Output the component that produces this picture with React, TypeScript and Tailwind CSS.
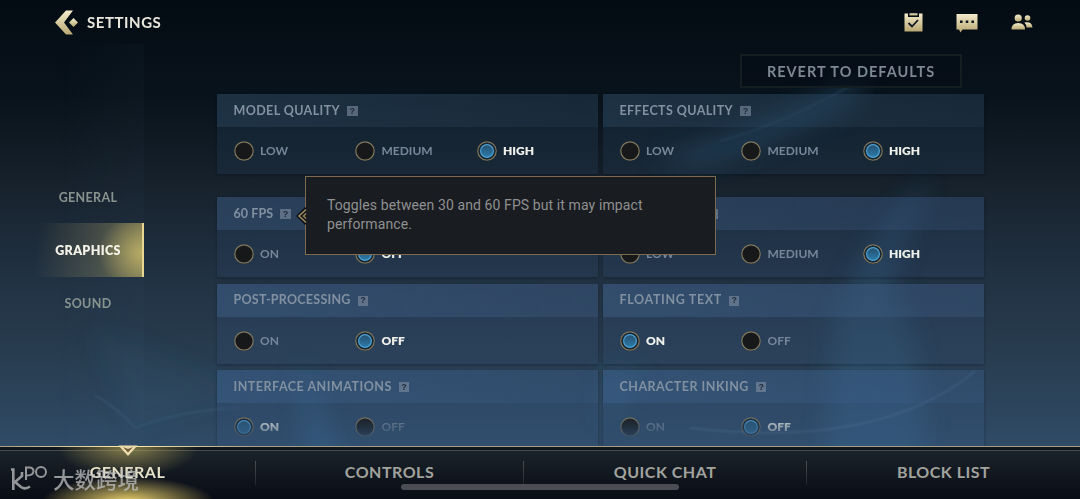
import type { ReactNode } from 'react'

type Option = { label: string; selected?: boolean }
type Setting = { title: string; tracking: string; options: Option[]; faded?: boolean }

const quality: Option[] = [{ label: 'LOW' }, { label: 'MEDIUM' }, { label: 'HIGH', selected: true }]

const rows: { gap: string; head: string; body: string; cards: Setting[] }[] = [
  {
    gap: 'mb-[23px]',
    head: 'from-[#33506b]/35 to-[#2a4358]/25',
    body: 'bg-[#26405a]/30',
    cards: [
      { title: 'MODEL QUALITY', tracking: 'tracking-[0.4px]', options: quality },
      { title: 'EFFECTS QUALITY', tracking: 'tracking-[0.4px]', options: quality },
    ],
  },
  {
    gap: 'mb-[6.5px]',
    head: 'from-[#3a587c]/45 to-[#38547a]/30',
    body: 'bg-[#2b4566]/30',
    cards: [
      { title: '60 FPS', tracking: 'tracking-[0.1px]', options: [{ label: 'ON' }, { label: 'OFF', selected: true }] },
      { title: 'RESOLUTION', tracking: 'tracking-[0.2px]', options: quality },
    ],
  },
  {
    gap: 'mb-[6.5px]',
    head: 'from-[#41628c]/45 to-[#41608a]/30',
    body: 'bg-[#304a6e]/35',
    cards: [
      { title: 'POST-PROCESSING', tracking: 'tracking-[0.25px]', options: [{ label: 'ON' }, { label: 'OFF', selected: true }] },
      { title: 'FLOATING TEXT', tracking: 'tracking-[0.65px]', options: [{ label: 'ON', selected: true }, { label: 'OFF' }] },
    ],
  },
  {
    gap: '',
    head: 'from-[#416896]/35 to-[#3e608b]/20',
    body: 'bg-[#345580]/30',
    cards: [
      { title: 'INTERFACE ANIMATIONS', tracking: 'tracking-[0.5px]', options: [{ label: 'ON', selected: true }, { label: 'OFF' }], faded: true },
      { title: 'CHARACTER INKING', tracking: 'tracking-[0.5px]', options: [{ label: 'ON' }, { label: 'OFF', selected: true }], faded: true },
    ],
  },
]

function Backdrop() {
  return (
    <svg className="absolute inset-0 -z-10" width="1080" height="446" viewBox="0 0 1080 446" preserveAspectRatio="none">
      <defs>
        <linearGradient id="sky" x1="0" y1="0" x2="0" y2="1">
          <stop offset="0" stopColor="#030b13" />
          <stop offset="0.22" stopColor="#09131b" />
          <stop offset="0.42" stopColor="#17222d" />
          <stop offset="0.6" stopColor="#203041" />
          <stop offset="0.8" stopColor="#283d50" />
          <stop offset="1" stopColor="#304b66" />
        </linearGradient>
        <filter id="soft" x="-50%" y="-50%" width="200%" height="200%"><feGaussianBlur stdDeviation="12" /></filter>
        <filter id="line" x="-20%" y="-20%" width="140%" height="140%"><feGaussianBlur stdDeviation="1" /></filter>
      </defs>
      <rect width="1080" height="446" fill="url(#sky)" />
      <g filter="url(#soft)" fill="#3a7fb0">
        <path d="M650 160 Q760 130 870 70 L850 105 Q760 150 700 165Z" opacity=".32" />
        <path d="M930 180 Q870 225 835 320 L822 480 L925 480 Q930 350 890 290 Q905 240 930 180Z" opacity=".24" />
        <path d="M300 360 L350 470 L305 470Z" opacity=".26" />
        <path d="M604 370 L640 370 L606 430Z" opacity=".25" />
        <path d="M90 330 L135 427 L240 390 L150 350Z" opacity=".07" />
      </g>
      <g filter="url(#line)" fill="none" stroke="#7fa6c8">
        <path d="M95 395 Q120 410 135 428 Q180 410 240 408" opacity=".16" strokeWidth="1.5" />
        <path d="M690 428 Q880 450 975 371" opacity=".22" strokeWidth="2" />
        <path d="M720 141 Q780 125 850 86" opacity=".16" strokeWidth="1.5" />
      </g>
    </svg>
  )
}

function Help() {
  return (
    <span className="flex h-2.5 w-[10.5px] items-center justify-center bg-[#8090a2]/60 font-['Liberation_Sans'] text-[9px] leading-none font-bold tracking-normal text-[#1c2a3a]">
      ?
    </span>
  )
}

function Radio({ selected }: { selected?: boolean }) {
  return (
    <svg width="20" height="20" viewBox="0 0 20 20" className="shrink-0">
      <circle cx="10" cy="10.6" r="9.4" fill="#0a1119" opacity=".5" />
      <circle cx="10" cy="10" r="9.2" fill="#171819" stroke="#81785d" strokeWidth="1.2" />
      {selected && (
        <>
          <circle cx="10" cy="10" r="8.2" fill="#14293b" />
          <circle cx="10" cy="10" r="6.4" fill="url(#blue)" stroke="#4f9fd0" strokeWidth="1.2" />
        </>
      )}
    </svg>
  )
}

function Card({ title, tracking, options, faded, head, body }: Setting & { head: string; body: string }) {
  return (
    <section className={`flex h-20 w-[381px] shrink-0 flex-col shadow-[0_1px_3px_rgba(5,12,20,0.35)] ${body}`}>
      <div className={`flex h-[33px] items-center gap-[7px] bg-linear-to-r pt-px pl-[16.5px] text-[12.5px] font-bold text-[#8291a1] ${head} ${tracking}`}>
        <span>{title}</span>
        <Help />
      </div>
      <div className={`flex h-[47px] items-center pt-px pl-[16.5px] ${faded ? 'mask-[linear-gradient(to_bottom,rgba(0,0,0,0.85)_30%,transparent_85%)]' : ''}`}>
        {options.map(o => (
          <div key={o.label} className="flex w-[121.5px] items-center gap-[6.5px]">
            <Radio selected={o.selected} />
            <span className={`text-[12px] ${o.selected ? 'font-extrabold text-[#eef0e9]' : 'font-bold text-[#77879a]'}`}>
              {o.label}
            </span>
          </div>
        ))}
      </div>
    </section>
  )
}

function Tooltip() {
  return (
    <div className="absolute top-[176px] left-[305px] flex h-[79px] w-[411px] border border-[#7d6b51] bg-[#191c20] pt-[19px] pl-[21px]">
      <svg className="absolute top-[29px] -left-[10px]" width="11" height="20" viewBox="0 0 11 20">
        <path d="M10 2 L2 10 L10 18" fill="#17191c" stroke="#0d1218" strokeWidth="3" />
        <path d="M10 3.5 L3 10 L10 16.5" fill="#17191c" stroke="#a28b61" strokeWidth="1.5" />
        <path d="M10 7.5 L7.5 10 L10 12.5" fill="none" stroke="#a28b61" strokeWidth="1.2" />
      </svg>
      <p className="font-['Roboto',sans-serif] text-[14px] leading-[19px] tracking-[0.1px] text-[#8f9091]">
        Toggles between 30 and 60 FPS but it may impact
        <br />
        performance.
      </p>
    </div>
  )
}

function Header() {
  return (
    <header className="flex h-11 items-center justify-between pr-[47px] pl-[55px]">
      <div className="flex items-center gap-[9px]">
        <svg width="23" height="25" viewBox="0 0 23 25">
          <path d="M11 0.5 H18 L9 12.5 L18 24.5 H11 L0 12.5Z" fill="url(#gold)" />
          <path d="M18.500 8 L23 12.5 L18.500 17 L14 12.5Z" fill="url(#gold)" />
        </svg>
        <h1 className="text-[15px] font-bold tracking-[0.55px] text-[#e9e7dd]">SETTINGS</h1>
      </div>
      <div className="flex items-center gap-[33px]">
        <svg width="19" height="19" viewBox="0 0 19 19" fill="url(#gold)">
          <path d="M0.500 0.500 H4 V4 H15 V0.500 H18.500 V18.500 H0.500Z" />
          <rect x="5.500" y="0.300" width="8" height="2.200" />
          <path d="M4.500 10 L8 13.500 L14 7" fill="none" stroke="#101820" strokeWidth="1.800" />
        </svg>
        <svg width="22" height="20" viewBox="0 0 22 20" fill="url(#gold)" className="mt-0.5">
          <path d="M0.500 1 H21.500 V16.500 H6.500 L4.500 19.500 L3 16.500 H0.500Z" />
          <path d="M4 7.500h2.600v2.600h-2.600z M9.700 7.500h2.600v2.600h-2.600z M15.400 7.500h2.600v2.600h-2.600z" fill="#101820" />
        </svg>
        <svg width="22" height="16" viewBox="0 0 22 16" fill="url(#gold)">
          <circle cx="7.200" cy="4" r="3.600" />
          <circle cx="16.500" cy="4" r="2.800" />
          <path d="M0.500 15.500 Q0.500 9 7.300 9 Q14 9 14 15.500Z" />
          <path d="M13.300 8.500 Q21 7 21.500 13.500 H15.500 Q15.500 10.500 13.300 8.500Z" />
        </svg>
      </div>
    </header>
  )
}

function SideTabs() {
  return (
    <nav className="flex h-full w-36 flex-col items-end bg-linear-to-r from-transparent from-40% to-[#4a6a8a]/5 pt-[128px] text-[12.5px] font-bold tracking-[0.35px] text-[#88938f]">
      <a className="flex h-[51px] w-28 items-center justify-center pt-0.5">GENERAL</a>
      <a className="flex h-[54px] w-28 items-center justify-center border-r-2 border-[#e9d691] bg-[radial-gradient(ellipse_40%_70%_at_100%_55%,rgba(215,198,110,0.7),transparent),linear-gradient(95deg,transparent_5%,rgba(110,110,85,0.5)_60%,rgba(150,142,88,0.7))] pt-[3px] pl-0.5 font-extrabold text-[#f4f2e7]">
        GRAPHICS
      </a>
      <a className="flex h-[52px] w-28 items-center justify-center pt-0.5">SOUND</a>
    </nav>
  )
}

function FooterTab({ children, className }: { children: ReactNode; className: string }) {
  return <a className={`flex h-[53px] items-center justify-center pb-[2px] ${className}`}>{children}</a>
}

function Divider() {
  return <span className="h-6 w-px bg-linear-to-b from-[#4a5052] to-[#20262d]" />
}

function Footer() {
  return (
    <footer className="relative flex h-[53px] items-center bg-linear-to-b from-[#1c252c] to-[#090c15] text-[16px] font-bold tracking-[0.5px] text-[#a2a39d]">
      <span className="absolute inset-x-0 top-0 h-px bg-[#a79e83]" />
      <span className="absolute inset-x-0 top-px h-[4px] border-b border-[#464b48] bg-[#10171d]" />
      <span className="absolute top-0 left-0 h-full w-[256px] bg-[radial-gradient(ellipse_28%_60%_at_50%_0%,rgba(180,166,91,0.7),transparent),radial-gradient(ellipse_34%_48%_at_50%_106%,rgba(240,215,110,1),transparent)]" />
      <span className="absolute top-0 left-0 h-px w-[256px] bg-linear-to-r from-transparent via-[#ffedb0] to-transparent" />
      <svg className="absolute -top-px left-[118px]" width="20" height="12" viewBox="0 0 20 12">
        <path d="M0.500 0.500 H19.500 L10 11Z" fill="#ecdcae" />
        <path d="M5 2 L10 7.500 L15 2 L10 4Z" fill="#715b35" />
      </svg>
      <FooterTab className="relative w-[255px] text-[#e5e0c7]">GENERAL</FooterTab>
      <Divider />
      <FooterTab className="w-[267px]">CONTROLS</FooterTab>
      <Divider />
      <FooterTab className="w-[282px]">QUICK CHAT</FooterTab>
      <Divider />
      <FooterTab className="flex-1">BLOCK LIST</FooterTab>
      <span className="absolute top-[38px] left-[401px] h-1.5 w-[278px] rounded-full bg-[#4b4c54]" />
      <div className="absolute top-[20px] left-2.5 flex items-center gap-1 text-[#c1c2c2]/75">
        <svg width="39" height="26" viewBox="0 0 39 26" fill="none" stroke="currentColor" strokeWidth="2.600">
          <path d="M1 3.500 H3.300 V24 M12 6 V10 L5 16 L11 21 Q15 24 20 20.500" />
          <path d="M16 14 V1.500 H20 Q23.500 2 23.500 5.500 Q23 9.500 17 9.500" strokeWidth="2" />
          <circle cx="31" cy="6" r="5" strokeWidth="2" />
        </svg>
        <span className="font-['Noto_Sans_CJK_SC',sans-serif] text-[21.500px] leading-6 font-medium tracking-normal">大数跨境</span>
      </div>
    </footer>
  )
}

export default function App() {
  return (
    <div className="relative isolate flex h-[499px] w-[1080px] flex-col overflow-hidden bg-[#06101a] font-['Lato','Noto_Sans_CJK_SC',sans-serif]">
      <svg width="0" height="0" className="absolute">
        <defs>
          <linearGradient id="gold" x1="0" y1="0" x2="0" y2="1">
            <stop offset="0" stopColor="#f3ebcb" />
            <stop offset="1" stopColor="#b9a873" />
          </linearGradient>
          <linearGradient id="blue" x1="0" y1="0" x2="0" y2="1">
            <stop offset="0" stopColor="#27506f" />
            <stop offset="1" stopColor="#2b7cab" />
          </linearGradient>
        </defs>
      </svg>
      <Backdrop />
      <Header />
      <main className="flex h-[402px] overflow-hidden">
        <SideTabs />
        <div className="ml-[73px] flex flex-col">
          <button className="mt-[10px] mr-[22px] mb-[6px] flex h-[34px] w-[222px] shrink-0 items-center justify-center self-end border-2 border-[#131e20] bg-[#050c15]/60 pt-px text-[14.500px] font-bold tracking-[1px] text-[#7c8893]">
            REVERT TO DEFAULTS
          </button>
          {rows.map((row, i) => (
            <div key={i} className={`flex shrink-0 gap-[5px] ${row.gap}`}>
              {row.cards.map(card => (
                <Card key={card.title} {...card} head={row.head} body={row.body} />
              ))}
            </div>
          ))}
        </div>
      </main>
      <Footer />
      <Tooltip />
    </div>
  )
}
